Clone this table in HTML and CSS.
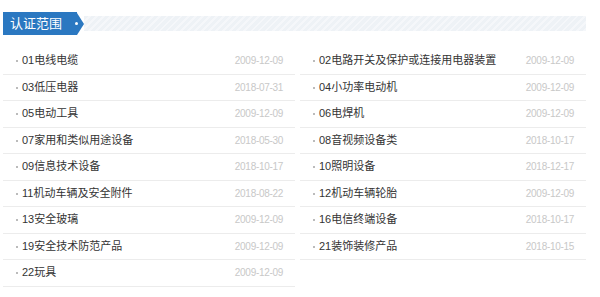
FILE: index.html
```html
<!DOCTYPE html>
<html lang="zh-CN">
<head>
<meta charset="utf-8">
<title>认证范围</title>
<link rel="stylesheet" href="styles.css">
</head>
<body>
<div class="panel">
  <div class="head">
    <div class="tag"><span class="tag-text">认证范围</span><span class="tag-dot"></span></div>
    <div class="tag-arrow"></div>
    <div class="stripe"></div>
  </div>
  <ul class="list">
    <li class="item"><span class="name">01电线电缆</span><span class="date">2009-12-09</span></li>
    <li class="item"><span class="name">02电路开关及保护或连接用电器装置</span><span class="date">2009-12-09</span></li>
    <li class="item"><span class="name">03低压电器</span><span class="date">2018-07-31</span></li>
    <li class="item"><span class="name">04小功率电动机</span><span class="date">2009-12-09</span></li>
    <li class="item"><span class="name">05电动工具</span><span class="date">2009-12-09</span></li>
    <li class="item"><span class="name">06电焊机</span><span class="date">2009-12-09</span></li>
    <li class="item"><span class="name">07家用和类似用途设备</span><span class="date">2018-05-30</span></li>
    <li class="item"><span class="name">08音视频设备类</span><span class="date">2018-10-17</span></li>
    <li class="item"><span class="name">09信息技术设备</span><span class="date">2018-10-17</span></li>
    <li class="item"><span class="name">10照明设备</span><span class="date">2018-12-17</span></li>
    <li class="item"><span class="name">11机动车辆及安全附件</span><span class="date">2018-08-22</span></li>
    <li class="item"><span class="name">12机动车辆轮胎</span><span class="date">2009-12-09</span></li>
    <li class="item"><span class="name">13安全玻璃</span><span class="date">2009-12-09</span></li>
    <li class="item"><span class="name">16电信终端设备</span><span class="date">2018-10-17</span></li>
    <li class="item"><span class="name">19安全技术防范产品</span><span class="date">2009-12-09</span></li>
    <li class="item"><span class="name">21装饰装修产品</span><span class="date">2018-10-15</span></li>
    <li class="item"><span class="name">22玩具</span><span class="date">2009-12-09</span></li>
  </ul>
</div>
</body>
</html>
```
FILE: styles.css
```css
html, body {
  margin: 0;
  padding: 0;
  background: #ffffff;
}
body {
  font-family: "Liberation Sans", "Noto Sans CJK SC", sans-serif;
  color: #333333;
}
.panel {
  width: 583px;
  padding: 12px 0 0 3px;
}
.head {
  display: flex;
  align-items: center;
  height: 23px;
}
.tag {
  width: 74px;
  height: 23px;
  background: #2b78c1;
  display: flex;
  align-items: center;
  box-sizing: border-box;
  padding-left: 7px;
  position: relative;
}
.tag-text {
  color: #ffffff;
  font-size: 13px;
  line-height: 23px;
}
.tag-dot {
  position: absolute;
  left: 72px;
  top: 10px;
  width: 3px;
  height: 3px;
  border-radius: 50%;
  background: #ffffff;
}
.tag-arrow {
  width: 0;
  height: 0;
  border-top: 11.5px solid transparent;
  border-bottom: 11.5px solid transparent;
  border-left: 7px solid #2b78c1;
}
.stripe {
  flex: 1;
  height: 15px;
  background: repeating-linear-gradient(135deg, #eef2f6 0 3px, #f5f7fa 3px 5px);
}
.list {
  list-style: none;
  margin: 13px 0 0 0;
  padding: 0;
  display: grid;
  grid-template-columns: 292px 286px;
  column-gap: 5px;
}
.item {
  display: flex;
  justify-content: space-between;
  align-items: center;
  height: 25.5px;
  border-bottom: 1px solid #ececec;
  padding: 0 12px 0 19px;
  position: relative;
}
.item::before {
  content: "";
  position: absolute;
  left: 13px;
  top: 12px;
  width: 2px;
  height: 2px;
  background: #bbbbbb;
}
.name {
  color: #333333;
  font-size: 11px;
  line-height: 25px;
}
.date {
  color: #c8c8c8;
  font-size: 10px;
  letter-spacing: -0.3px;
  line-height: 25px;
}
```
